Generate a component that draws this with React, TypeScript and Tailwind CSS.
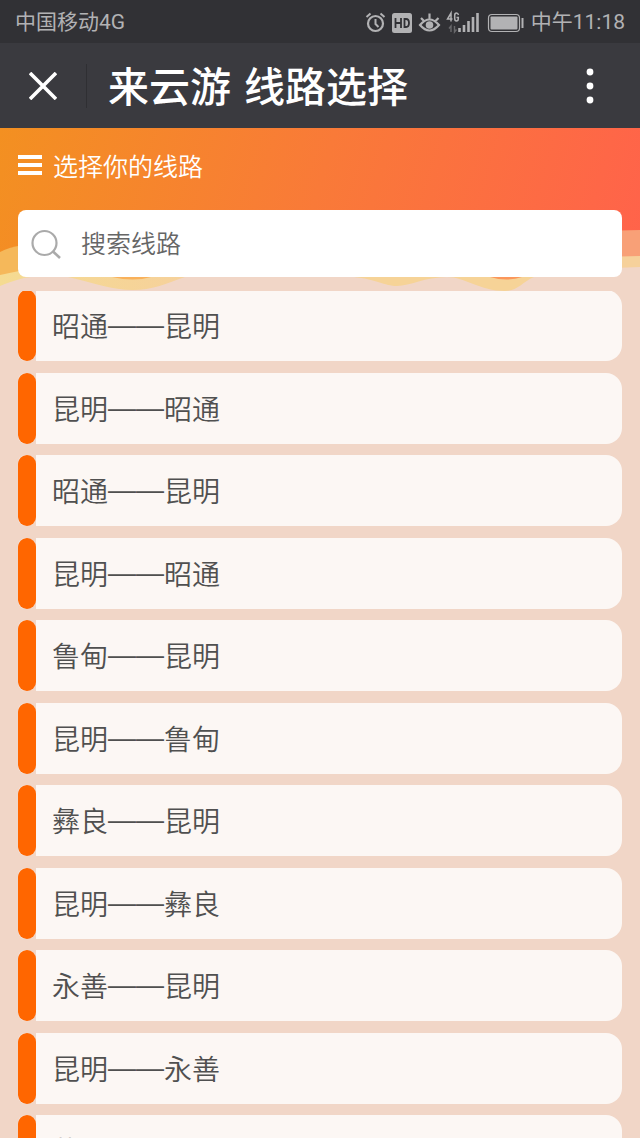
import React from "react";

const routes: [string, string][] = [
  ["昭通", "昆明"],
  ["昆明", "昭通"],
  ["昭通", "昆明"],
  ["昆明", "昭通"],
  ["鲁甸", "昆明"],
  ["昆明", "鲁甸"],
  ["彝良", "昆明"],
  ["昆明", "彝良"],
  ["永善", "昆明"],
  ["昆明", "永善"],
  ["盐津", "昆明"],
];

function StatusIcons() {
  return (
    <svg className="h-6 w-40" viewBox="364 9 160 24" fill="none" stroke="#b2b2b4" aria-hidden="true">
      <circle cx="375.500" cy="22.500" r="7.500" strokeWidth="2.200" />
      <path d="M375.500 18v5l3 3M366.500 16l4-3.500M384.500 16l-4-3.500" strokeWidth="2" />
      <rect x="392" y="12" width="20" height="20" rx="2.500" fill="#b2b2b4" stroke="none" />
      <path d="M395.500 17v10M401 17v10M395.500 22h5.500M404.500 18v8h1.500q3 0 3-4t-3-4z" stroke="#313135" strokeWidth="1.800" />
      <path d="M420 24q9.500-11 19 0q-9.500 11-19 0zM421 17l3 3M429.500 12.500v5M438.500 17l-3 3" strokeWidth="2.200" />
      <circle cx="429.500" cy="24" r="3.800" fill="#b2b2b4" stroke="none" />
      <path d="M451 20.500v-8.500l-3.500 6h5M458.500 14q-.5-2-2-2q-1.800 0-1.800 2.500v3q0 2.500 1.800 2.500t1.800-2.500v-1h-1.800" strokeWidth="1.500" />
      <path d="M451 31v-6l-2 2.500M454.500 25v6l2-2.500" stroke="#69696c" strokeWidth="1.400" />
      <path d="M459.500 27v4M464 24v7M468.500 20v11M473 16v15M477.500 12v19" strokeWidth="2.600" />
      <rect x="488.500" y="13.500" width="31" height="17" rx="3.500" strokeWidth="1.200" />
      <rect x="490.500" y="15.500" width="27" height="13" rx="1" fill="#b2b2b4" stroke="none" />
      <path d="M522.500 17v10" strokeWidth="2" />
    </svg>
  );
}

function Waves() {
  return (
    <svg
      className="absolute inset-0 h-full w-full"
      viewBox="0 0 640 163"
      preserveAspectRatio="none"
      aria-hidden="true"
    >
      <defs>
        <linearGradient id="sky" gradientUnits="userSpaceOnUse" x1="0" y1="0" x2="620" y2="180">
          <stop offset="0" stopColor="#f39021" />
          <stop offset="0.5" stopColor="#f97a38" />
          <stop offset="1" stopColor="#ff634a" />
        </linearGradient>
        <linearGradient id="foam" x1="0" x2="1" y1="0" y2="0">
          <stop offset="0" stopColor="#f5db91" />
          <stop offset="1" stopColor="#f6d19b" />
        </linearGradient>
      </defs>
      <path d="M0 0H640V130H0Z" fill="url(#sky)" />
      <path d="M0 124Q9 119 24 117V147H0Z" fill="#f5b85a" />
      <path d="M0 147Q9 145 24 142C50 144 90 150 115 149H185C165 156 152 162 133 162C112 162 94 155 68 149C45 144 34 149 24 150Q9 154 0 158Z" fill="url(#foam)" />
      <path d="M112 149H151Q134 154 112 149Z" fill="#f9b15b" />
      <path d="M354 149C375 151 385 158 397 158C410 158 425 149 447 149C465 149 480 163 505 163C518 163 522 154 534 149Z" fill="#f6d397" />
      <path d="M490 149H522Q507 154 490 149Z" fill="#fb975b" />
      <path d="M600 104Q620 102 640 102V130H600Z" fill="#f8a077" />
      <path d="M600 130Q620 128 640 128V139Q620 139 600 142Z" fill="#f6d19b" />
    </svg>
  );
}

export default function App() {
  return (
    <div
      lang="zh-CN"
      className="flex h-screen flex-col overflow-hidden bg-[#f1d6c7] font-['Noto_Sans_CJK_SC',sans-serif]"
    >
      <div className="flex h-[43px] shrink-0 items-center justify-between bg-[#313135] px-[15px] text-[#b2b2b4]">
        <span className="pt-0.5 font-[Roboto,'Noto_Sans_CJK_SC',sans-serif] text-[21px]">中国移动4G</span>
        <div className="flex items-center gap-[7px]">
          <StatusIcons />
          <span className="pt-0.5 font-[Roboto,'Noto_Sans_CJK_SC',sans-serif] text-[21px]">中午11:18</span>
        </div>
      </div>

      <header className="flex h-[85px] shrink-0 items-center bg-[#3a3a3f] text-white">
        <button type="button" aria-label="关闭" className="flex h-full w-[86px] items-center justify-center">
          <svg className="h-7 w-7" viewBox="0 0 28 28" stroke="currentColor" strokeWidth="3.600" aria-hidden="true">
            <path d="M1 1L27 27M27 1L1 27" />
          </svg>
        </button>
        <div className="h-11 w-px bg-[#2f2f33]" />
        <h1 className="flex-1 pt-1 pl-[21px] font-['DejaVu_Sans','Noto_Sans_CJK_SC',sans-serif] text-[41px] leading-[60px] font-medium">
          来云游 线路选择
        </h1>
        <button type="button" aria-label="更多" className="flex h-full w-25 items-center justify-center">
          <svg className="h-9 w-2" viewBox="0 0 8 36" fill="currentColor" aria-hidden="true">
            <circle cx="4" cy="4" r="3.400" />
            <circle cx="4" cy="18" r="3.400" />
            <circle cx="4" cy="32" r="3.400" />
          </svg>
        </button>
      </header>

      <section className="relative shrink-0 pb-[14px]">
        <Waves />
        <div className="relative px-[18px]">
          <div className="flex h-[82px] items-center gap-[11px] pb-1.5 text-white">
            <svg className="h-6 w-6 shrink-0" viewBox="0 0 24 24" fill="currentColor" aria-hidden="true">
              <path d="M0 1h24v4H0zM0 9h24v4H0zM0 17h24v4H0z" />
            </svg>
            <h2 className="text-[25px] font-[350]">选择你的线路</h2>
          </div>
          <label className="flex h-[67px] items-center gap-5 rounded-lg bg-white pl-[13px]">
            <svg className="h-[30px] w-[30px] shrink-0" viewBox="0 0 30 30" fill="none" stroke="#aaaaaa" strokeWidth="2.200" aria-hidden="true">
              <circle cx="13.500" cy="14" r="12" />
              <path d="M22 22.500L29 29" strokeWidth="2.600" />
            </svg>
            <input
              type="search"
              aria-label="搜索线路"
              placeholder="搜索线路"
              className="min-w-0 flex-1 bg-transparent pb-0.5 text-[25px] font-[350] text-[#555] outline-none placeholder:text-[#666]"
            />
          </label>
        </div>
      </section>

      <main className="min-h-0 flex-1 overflow-hidden px-[18px]">
        <ul className="-mt-px">
          {routes.map(([from, to], i) => (
            <li key={i} className="odd:mb-3 even:mb-[11px]">
              <a
                href="#"
                className="flex h-[71px] overflow-hidden rounded-r-2xl rounded-l-lg bg-[#fcf7f4] text-[28px] font-[350] text-[#505050]"
              >
                <span className="flex h-full w-[18px] bg-[#f1d6c7]">
                  <span className="flex-1 rounded-full bg-[#ff6600]" />
                </span>
                <span className="flex items-center pb-0.5 pl-4">
                  {from}
                  <span className="font-['Liberation_Sans',sans-serif]">——</span>
                  {to}
                </span>
              </a>
            </li>
          ))}
        </ul>
      </main>
    </div>
  );
}
